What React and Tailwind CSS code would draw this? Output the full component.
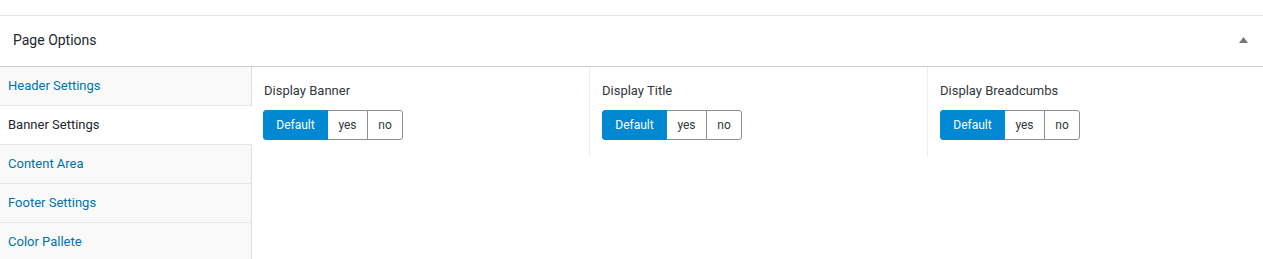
import { useState } from 'react';

const tabs = ['Header Settings', 'Banner Settings', 'Content Area', 'Footer Settings', 'Color Pallete'];

const fields = ['Display Banner', 'Display Title', 'Display Breadcumbs'];

function ButtonSet({ value, onChange, shift }) {
	const opts = [
		{ key: 'default', label: 'Default', w: 'w-[65px]' },
		{ key: 'yes', label: 'yes', w: 'w-[41px]' },
		{ key: 'no', label: 'no', w: 'w-[36px]' },
	];
	return (
		<div className={`flex h-[30px] ${shift ? '-ml-px' : ''}`}>
			{opts.map((o, i) => (
				<button
					key={o.key}
					onClick={() => onChange(o.key)}
					className={`${o.w} h-[30px] text-[12px] border ${
						i === 0 ? 'rounded-l-[3px]' : '-ml-px'
					} ${i === opts.length - 1 ? 'rounded-r-[3px]' : ''} ${
						value === o.key
							? 'bg-[#0088d3] border-[#0088d3] text-white relative z-10'
							: 'bg-white border-[#8c8f94] text-[#32373c]'
					}`}>
					{o.label}
				</button>
			))}
		</div>
	);
}

export default function App() {
	const [active, setActive] = useState(1);
	const [values, setValues] = useState(['default', 'default', 'default']);

	return (
		<div className="w-[1263px] h-[259px] bg-white overflow-hidden font-['Roboto',sans-serif]">
			<div className="h-[16px] border-b border-[#e5e5e5]" />
			<div className="h-[51px] flex items-center justify-between pl-[13px] pr-[15px] pb-[2px] border-b border-[#cccccc]">
				<h2 className="text-[14px] text-[#23282d]">Page Options</h2>
				<svg width="9" height="6" viewBox="0 0 9 6">
					<path d="M4.5 0 L9 6 L0 6 Z" fill="#72777c" />
				</svg>
			</div>
			<div className="flex">
				<ul className="w-[252px] shrink-0 bg-[#f9f9f9] border-r border-[#dddddd] h-[193px]">
					{tabs.map((t, i) => (
						<li
							key={t}
							onClick={() => setActive(i)}
							className={`h-[39px] pl-2 flex items-center text-[13px] border-b border-[#e8e8e8] cursor-pointer ${
								active === i ? 'bg-white text-[#23282d] -mr-px' : 'text-[#0073aa]'
							}`}>
							{t}
						</li>
					))}
				</ul>
				<div className="flex-1 grid grid-cols-[338px_338px_1fr] items-start">
					{fields.map((f, i) => (
						<div
							key={f}
							className={`h-[90px] pl-3 pt-[16px] ${i < 2 ? 'border-r border-[#eeeeee]' : ''}`}>
							<div className="text-[13px] text-[#32373c] leading-[16px] mb-[11px]">{f}</div>
							<ButtonSet
								shift={i === 0}
								value={values[i]}
								onChange={(v) => setValues((prev) => prev.map((x, j) => (j === i ? v : x)))}
							/>
						</div>
					))}
				</div>
			</div>
		</div>
	);
}
